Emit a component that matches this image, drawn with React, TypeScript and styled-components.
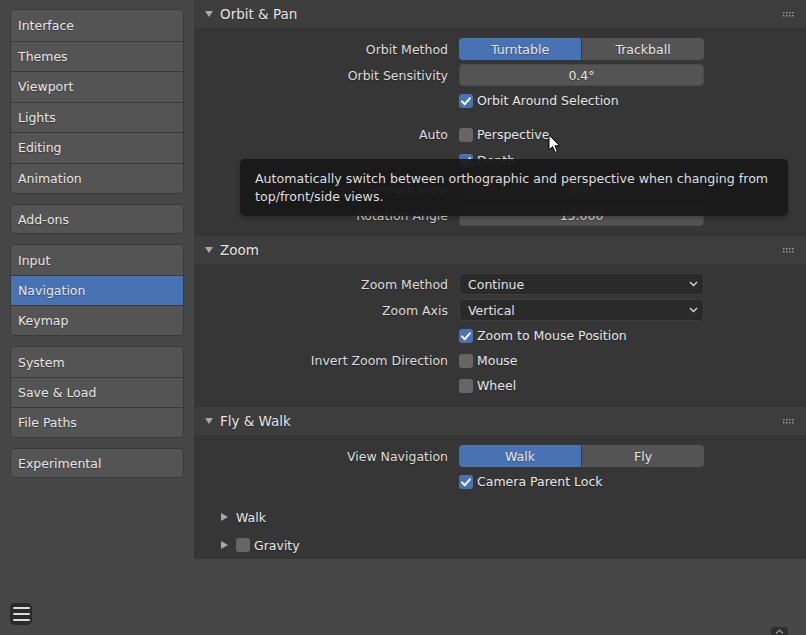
import styled, { createGlobalStyle } from "styled-components";

const GlobalStyle = createGlobalStyle`
  html, body {
    margin: 0;
    padding: 0;
    background: #474747;
    font-family: "DejaVu Sans", "Noto Sans", sans-serif;
    color: #e6e6e6;
    overflow: hidden;
  }
  * { box-sizing: border-box; }
`;

const sections = [
  ["Interface", "Themes", "Viewport", "Lights", "Editing", "Animation"],
  ["Add-ons"],
  ["Input", "Navigation", "Keymap"],
  ["System", "Save & Load", "File Paths"],
  ["Experimental"],
];

function Check() {
  return (
    <svg width="14" height="14" viewBox="0 0 14 14">
      <path d="M3 7.4 L5.8 10.2 L11 4.2" fill="none" stroke="#fff" strokeWidth="2" strokeLinecap="round" strokeLinejoin="round" />
    </svg>
  );
}

function CheckOption({ checked, label }: { checked?: boolean; label: string }) {
  return (
    <CheckLine>
      <CheckBox $checked={checked}>{checked ? <Check /> : null}</CheckBox>
      <span>{label}</span>
    </CheckLine>
  );
}

function Chevron() {
  return (
    <svg width="9" height="6" viewBox="0 0 9 6">
      <path d="M1 1 L4.5 4.5 L8 1" fill="none" stroke="#d8d8d8" strokeWidth="1.4" />
    </svg>
  );
}

function DragDots() {
  const dots = [];
  for (let r = 0; r < 2; r++)
    for (let c = 0; c < 4; c++) dots.push(<rect key={`${r}${c}`} x={c * 3} y={r * 3} width="1.5" height="1.5" fill="#9a9a9a" />);
  return (
    <Handle width="11" height="5" viewBox="0 0 11 5">
      {dots}
    </Handle>
  );
}

function PanelHead({ title }: { title: string }) {
  return (
    <PanelHeader>
      <svg width="8" height="6" viewBox="0 0 8 6">
        <path d="M0 0 H8 L4 6 Z" fill="#a8a8a8" />
      </svg>
      <PanelTitle>{title}</PanelTitle>
      <DragDots />
    </PanelHeader>
  );
}

function SubArrow() {
  return (
    <svg width="7" height="8" viewBox="0 0 7 8">
      <path d="M0 0 L7 4 L0 8 Z" fill="#a8a8a8" />
    </svg>
  );
}

function App() {
  return (
    <Window>
      <GlobalStyle />
      <Sidebar>
        {sections.map((group, i) => (
          <NavGroup key={i}>
            {group.map((name) => (
              <NavItem key={name} $active={name === "Navigation"}>
                {name}
              </NavItem>
            ))}
          </NavGroup>
        ))}
        <MenuButton>
          <span />
          <span />
          <span />
        </MenuButton>
      </Sidebar>

      <Main>
        <Panel>
          <PanelHead title="Orbit & Pan" />
          <PanelBody $pb={10}>
            <Row>
              <Label>Orbit Method</Label>
              <ToggleGroup>
                <ToggleButton $active>Turntable</ToggleButton>
                <ToggleButton>Trackball</ToggleButton>
              </ToggleGroup>
            </Row>
            <Row>
              <Label>Orbit Sensitivity</Label>
              <NumberField>0.4°</NumberField>
            </Row>
            <Row $h={21}>
              <Label />
              <CheckOption checked label="Orbit Around Selection" />
            </Row>
            <Row $h={21} $mt={9}>
              <Label>Auto</Label>
              <CheckOption label="Perspective" />
            </Row>
            <Row $h={21} $mt={1}>
              <Label />
              <CheckOption checked label="Depth" />
            </Row>
            <Row $mt={3}>
              <Label>Smooth View</Label>
              <NumberField>200</NumberField>
            </Row>
            <Row>
              <Label>Rotation Angle</Label>
              <NumberField>15.000</NumberField>
            </Row>
          </PanelBody>
        </Panel>

        <Panel>
          <PanelHead title="Zoom" />
          <PanelBody $pt={9} $pb={11}>
            <Row>
              <Label>Zoom Method</Label>
              <Select>
                <span>Continue</span>
                <Chevron />
              </Select>
            </Row>
            <Row>
              <Label>Zoom Axis</Label>
              <Select>
                <span>Vertical</span>
                <Chevron />
              </Select>
            </Row>
            <Row $h={21}>
              <Label />
              <CheckOption checked label="Zoom to Mouse Position" />
            </Row>
            <Row $h={21}>
              <Label>Invert Zoom Direction</Label>
              <CheckOption label="Mouse" />
            </Row>
            <Row $h={21}>
              <Label />
              <CheckOption label="Wheel" />
            </Row>
          </PanelBody>
        </Panel>

        <Panel>
          <PanelHead title="Fly & Walk" />
          <PanelBody $pb={0}>
            <Row>
              <Label>View Navigation</Label>
              <ToggleGroup>
                <ToggleButton $active>Walk</ToggleButton>
                <ToggleButton>Fly</ToggleButton>
              </ToggleGroup>
            </Row>
            <Row $h={21}>
              <Label />
              <CheckOption checked label="Camera Parent Lock" />
            </Row>
            <SubList>
              <SubHeader>
                <SubArrow />
                <span>Walk</span>
              </SubHeader>
              <SubHeader>
                <SubArrow />
                <CheckOption label="Gravity" />
              </SubHeader>
            </SubList>
          </PanelBody>
        </Panel>

        <Tooltip>
          Automatically switch between orthographic and perspective when changing from
          <br />
          top/front/side views.
        </Tooltip>

        <Cursor width="13" height="20" viewBox="0 0 13 20">
          <path d="M1 1 L1 16 L4.6 12.6 L7.2 18.4 L9.4 17.4 L6.9 11.8 L11.6 11.8 Z" fill="#fff" stroke="#000" strokeWidth="1" strokeLinejoin="round" />
        </Cursor>

        <CornerTab>
          <svg width="9" height="5" viewBox="0 0 9 5">
            <path d="M1 4.5 L4.5 1 L8 4.5" fill="none" stroke="#9a9a9a" strokeWidth="1.2" />
          </svg>
        </CornerTab>
      </Main>
    </Window>
  );
}

const Window = styled.div`
  display: flex;
  height: 100vh;
  width: 100vw;
`;

const Sidebar = styled.nav`
  width: 194px;
  flex-shrink: 0;
  display: flex;
  flex-direction: column;
  gap: 10px;
  padding: 9px 10px 10px;
  background: #474747;
`;

const NavGroup = styled.div`
  display: flex;
  flex-direction: column;
  border: 1px solid #393939;
  border-radius: 5px;
  overflow: hidden;
  background: #545454;

  &:first-child > div {
    height: 30.5px;
  }
`;

const NavItem = styled.div<{ $active?: boolean }>`
  height: 30px;
  display: flex;
  align-items: center;
  padding-left: 7px;
  font-size: 12.5px;
  color: #e6e6e6;
  background: ${(p) => (p.$active ? "#4772b3" : "#545454")};
  text-shadow: 0 1px 1px rgba(0, 0, 0, 0.35);

  &:only-child {
    height: 28px;
  }

  & + & {
    border-top: 1px solid #393939;
  }
`;

const MenuButton = styled.div`
  margin-top: auto;
  width: 22px;
  height: 22px;
  border-radius: 5px;
  background: #2a2a2a;
  display: flex;
  flex-direction: column;
  justify-content: center;
  align-items: center;
  gap: 4px;

  span {
    display: block;
    width: 17px;
    height: 2px;
    background: #dcdcdc;
    border-radius: 1px;
  }
`;

const Main = styled.main`
  flex: 1;
  position: relative;
  background: #474747;
  display: flex;
  flex-direction: column;
`;

const Panel = styled.section`
  display: flex;
  flex-direction: column;
`;

const PanelHeader = styled.div`
  height: 28px;
  display: flex;
  align-items: center;
  gap: 7px;
  padding-left: 11px;
  background: #3d3d3d;
`;

const PanelTitle = styled.span`
  font-size: 13.5px;
  color: #e6e6e6;
  text-shadow: 0 1px 1px rgba(0, 0, 0, 0.35);
`;

const Handle = styled.svg`
  margin-left: auto;
  margin-right: 12px;
`;

const PanelBody = styled.div<{ $pt?: number; $pb?: number }>`
  display: flex;
  flex-direction: column;
  gap: 4px;
  padding-top: ${(p) => (p.$pt ?? 10)}px;
  padding-bottom: ${(p) => (p.$pb ?? 8)}px;
  background: #363636;
`;

const Row = styled.div<{ $h?: number; $mt?: number }>`
  display: grid;
  grid-template-columns: 254px 245px;
  column-gap: 11px;
  align-items: center;
  height: ${(p) => p.$h ?? 22}px;
  margin-top: ${(p) => p.$mt ?? 0}px;
`;

const Label = styled.span`
  text-align: right;
  font-size: 12.5px;
  color: #dcdcdc;
  white-space: nowrap;
  text-shadow: 0 1px 1px rgba(0, 0, 0, 0.35);
`;

const ToggleGroup = styled.div`
  display: flex;
  height: 22px;
  border-radius: 4px;
  overflow: hidden;
  gap: 1px;
  background: #3a3a3a;
`;

const ToggleButton = styled.div<{ $active?: boolean }>`
  flex: 1;
  display: flex;
  align-items: center;
  justify-content: center;
  font-size: 12.5px;
  color: #e6e6e6;
  background: ${(p) => (p.$active ? "#4772b3" : "#545454")};
  text-shadow: 0 1px 1px rgba(0, 0, 0, 0.35);
`;

const NumberField = styled.div`
  height: 22px;
  border-radius: 4px;
  background: #545454;
  border: 1px solid #4a4a4a;
  display: flex;
  align-items: center;
  justify-content: center;
  font-size: 12.5px;
  color: #e6e6e6;
  text-shadow: 0 1px 1px rgba(0, 0, 0, 0.35);
`;

const Select = styled.div`
  height: 22px;
  border-radius: 4px;
  background: #2a2a2a;
  border: 1px solid #3f3f3f;
  display: flex;
  align-items: center;
  justify-content: space-between;
  padding: 0 5px 0 8px;
  font-size: 12.5px;
  color: #e0e0e0;
`;

const CheckLine = styled.div`
  display: flex;
  align-items: center;
  gap: 4px;
  font-size: 12.5px;
  color: #e6e6e6;
  white-space: nowrap;
  text-shadow: 0 1px 1px rgba(0, 0, 0, 0.35);
`;

const CheckBox = styled.div<{ $checked?: boolean }>`
  width: 14px;
  height: 14px;
  border-radius: 3px;
  background: ${(p) => (p.$checked ? "#4772b3" : "#666666")};
  display: flex;
  align-items: center;
  justify-content: center;
  flex-shrink: 0;
`;

const SubList = styled.div`
  display: flex;
  flex-direction: column;
  margin-top: 7px;
`;

const SubHeader = styled.div`
  height: 28px;
  display: flex;
  align-items: center;
  gap: 8px;
  padding-left: 27px;
  font-size: 12.5px;
  color: #e6e6e6;
  text-shadow: 0 1px 1px rgba(0, 0, 0, 0.35);
`;

const Tooltip = styled.div`
  position: absolute;
  left: 46px;
  top: 159px;
  width: 548px;
  padding: 11px 15px 10px;
  border-radius: 5px;
  background: rgba(24, 24, 24, 0.94);
  font-size: 12.6px;
  line-height: 18px;
  color: #dedede;
  box-shadow: 0 2px 4px rgba(0, 0, 0, 0.25);
`;

const Cursor = styled.svg`
  position: absolute;
  left: 354px;
  top: 134px;
`;

const CornerTab = styled.div`
  position: absolute;
  left: 577px;
  bottom: 0;
  width: 17px;
  height: 8px;
  border-radius: 4px 4px 0 0;
  background: #2e2e2e;
  display: flex;
  justify-content: center;
  align-items: center;
`;

export default App;
